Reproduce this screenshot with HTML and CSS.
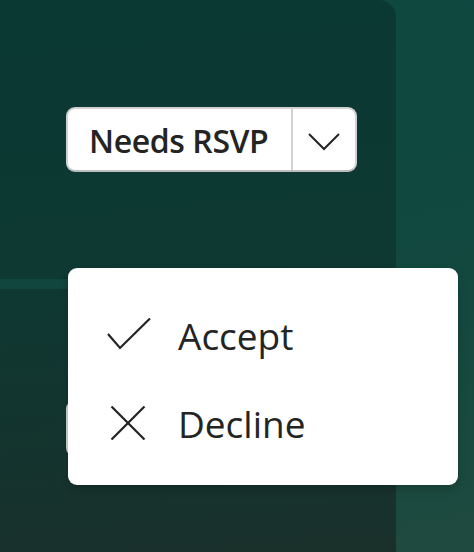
FILE: index.html
```html
<!DOCTYPE html>
<html>
<head>
<meta charset="utf-8">
<link rel="stylesheet" href="styles.css">
</head>
<body>
<div class="page">
  <div class="pane">
    <div class="pane-top">
      <div class="split-btn">
        <span class="split-label">Needs RSVP</span>
        <span class="split-toggle">
          <svg width="34" height="20" viewBox="0 0 34 20"><path d="M2 2 L17 17 L32 2" fill="none" stroke="#242424" stroke-width="2"/></svg>
        </span>
      </div>
    </div>
    <div class="strip"></div>
    <div class="pane-bottom">
      <div class="ghost-btn"></div>
    </div>
  </div>
  <div class="side"></div>
  <div class="menu">
    <div class="menu-item">
      <svg class="menu-icon" width="46" height="34" viewBox="0 0 46 34"><path d="M1 16 L13 30 L43 0.5" fill="none" stroke="#242424" stroke-width="2.2"/></svg>
      <span>Accept</span>
    </div>
    <div class="menu-item">
      <svg class="menu-icon" width="46" height="34" viewBox="0 0 46 34"><path d="M4.5 0.5 L37.5 33.5 M37.5 0.5 L4.5 33.5" fill="none" stroke="#242424" stroke-width="2.2"/></svg>
      <span>Decline</span>
    </div>
  </div>
</div>
</body>
</html>
```
FILE: styles.css
```css
* { box-sizing: border-box; }
html, body {
  margin: 0;
  padding: 0;
  width: 474px;
  height: 552px;
  overflow: hidden;
}
body {
  font-family: "Open Sans", "Noto Sans", sans-serif;
  background: linear-gradient(170deg, #0d4840 0%, #10483f 45%, #1f4a3f 100%);
}
.page {
  position: relative;
  display: grid;
  grid-template-columns: 396px 1fr;
  height: 552px;
}
.pane {
  display: flex;
  flex-direction: column;
  border-radius: 0 17px 0 0;
  background: linear-gradient(175deg, #0a3833 0%, #0e3933 45%, #13352f 70%, #1a302b 100%);
}
.pane-top {
  height: 279px;
  padding: 107px 0 0 66px;
}
.split-btn {
  display: flex;
  width: 291px;
  height: 65px;
  background: #fff;
  border: 2px solid #d1d1d1;
  border-bottom-color: #bdbdbd;
  border-radius: 9px;
}
.split-label {
  flex: 1;
  display: flex;
  align-items: center;
  padding-left: 21px;
  padding-top: 1px;
  font-size: 32px;
  font-weight: 600;
  color: #242424;
  border-right: 2px solid #d1d1d1;
  letter-spacing: -0.4px;
}
.split-toggle {
  width: 62px;
  display: flex;
  align-items: center;
  justify-content: center;
  padding-top: 4px;
}
.strip {
  height: 10px;
  background: #11463e;
}
.pane-bottom {
  flex: 1;
  padding: 111px 0 0 66px;
}
.ghost-btn {
  width: 200px;
  height: 57px;
  background: #fff;
  border: 2px solid #d1d1d1;
  border-radius: 9px;
}
.menu {
  position: absolute;
  left: 68px;
  top: 268px;
  width: 390px;
  height: 217px;
  background: #fff;
  border-radius: 9px;
  box-shadow: 0 4px 10px rgba(0,0,0,0.18);
  display: flex;
  flex-direction: column;
  padding-top: 23px;
}
.menu-item {
  height: 88px;
  display: flex;
  align-items: center;
  padding-left: 39px;
  gap: 25px;
  font-size: 37px;
  color: #242424;
}
.menu-item span {
  line-height: 1;
}
```
